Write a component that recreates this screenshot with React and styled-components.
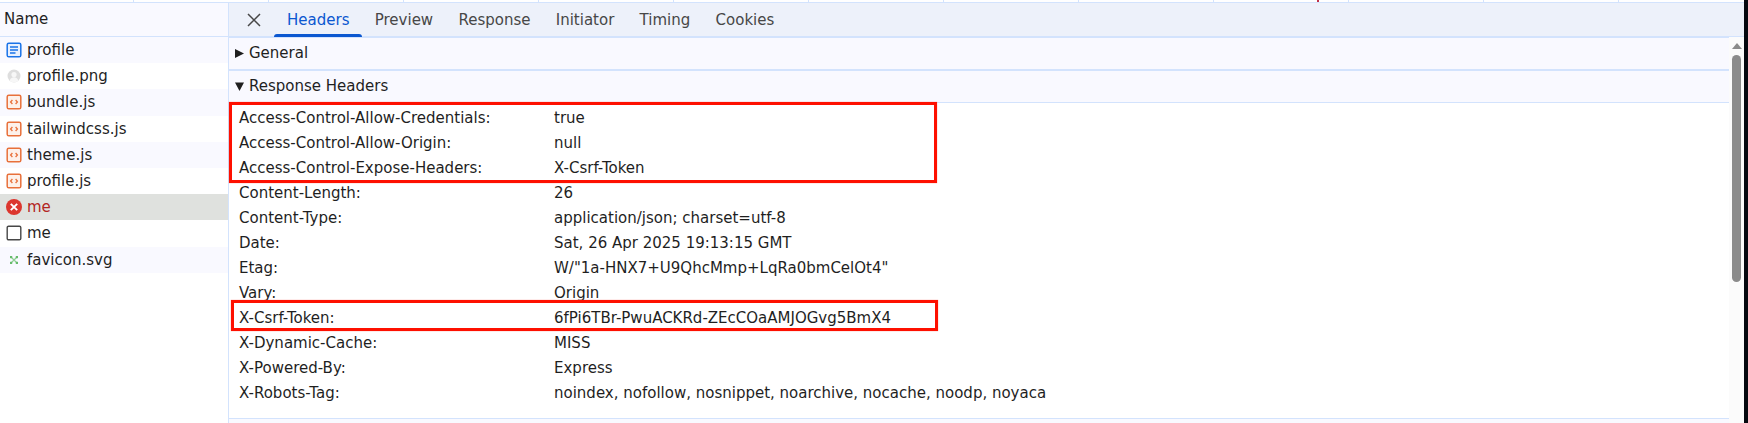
import React from "react";
import styled, { createGlobalStyle } from "styled-components";

const Global = createGlobalStyle`
  html, body { margin: 0; padding: 0; background: #fff; overflow: hidden; }
  body { font-family: "DejaVu Sans", sans-serif; font-size: 15px; color: #1f1f1f; }
`;

const Page = styled.div`
  width: 1748px;
  height: 423px;
  display: flex;
  overflow: hidden;
`;
const Column = styled.div`
  flex: 1;
  min-width: 0;
  display: flex;
  flex-direction: column;
`;
const Ruler = styled.div`
  height: 2px;
  flex: none;
  display: flex;
  border-bottom: 1px solid #d3e3fd;
  background: #fff;
  overflow: hidden;
`;
const RulerCell = styled.div`
  flex: none;
  width: ${p => p.$w}px;
  height: 2px;
  box-sizing: border-box;
  border-right: 1px solid #d3e3fd;
  position: relative;
`;
const RulerMark = styled.div`
  position: absolute;
  left: 103px;
  top: 0;
  width: 2px;
  height: 2px;
  background: #c0304a;
`;
const Main = styled.div`
  flex: 1;
  display: flex;
  min-height: 0;
`;
const Names = styled.div`
  width: 228px;
  flex: none;
  border-right: 1px solid #d3e3fd;
  background: #fff;
`;
const NameHead = styled.div`
  height: 33px;
  line-height: 33px;
  padding-left: 4px;
  background: #f9f9ff;
  border-bottom: 1px solid #d3e3fd;
  color: #1f1f1f;
`;
const NameRow = styled.div`
  height: 26.2px;
  line-height: 26px;
  display: flex;
  align-items: center;
  background: ${p => (p.$selected ? "#dfe1de" : p.$odd ? "#f9f9ff" : "#fff")};
  color: ${p => (p.$error ? "#b3261e" : "#1f1f1f")};
`;
const IconSlot = styled.span`
  width: 27px;
  flex: none;
  display: flex;
  justify-content: center;
`;
const Details = styled.div`
  flex: 1;
  min-width: 0;
  display: flex;
  flex-direction: column;
`;
const TabBar = styled.div`
  height: 33px;
  flex: none;
  display: flex;
  align-items: stretch;
  background: #edf1fa;
  border-bottom: 2px solid #d3e3fd;
`;
const Close = styled.div`
  width: 45.4px;
  box-sizing: border-box;
  padding-left: 5px;
  flex: none;
  display: flex;
  align-items: center;
  justify-content: center;
`;
const Tab = styled.div`
  padding: 0 12.65px;
  line-height: 34px;
  color: ${p => (p.$active ? "#0b57d0" : "#474747")};
  position: relative;
`;
const TabUnderline = styled.div`
  position: absolute;
  left: 0;
  right: 0;
  bottom: -1px;
  height: 3px;
  border-radius: 3px 3px 0 0;
  background: #0b57d0;
`;
const Body = styled.div`
  flex: 1;
  min-height: 0;
  display: flex;
`;
const Content = styled.div`
  flex: 1;
  min-width: 0;
`;
const Section = styled.div`
  height: 31px;
  display: flex;
  align-items: center;
  background: #f9f9ff;
  border-bottom: ${p => p.$thin ? 1 : 2}px solid #d3e3fd;
  padding-left: 6px;
  color: #1f1f1f;
`;
const SectionLabel = styled.span`
  line-height: 30px;
  height: 30px;
  margin-bottom: 1px;
`;
const Arrow = styled.svg`
  width: 9px;
  height: 9px;
  margin-right: 5px;
  margin-bottom: 1px;
  flex: none;
`;
const Rows = styled.div`
  padding-top: 3px;
  height: 316px;
  box-sizing: border-box;
  position: relative;
  border-bottom: 1px solid #d3e3fd;
`;
const HeaderRow = styled.div`
  height: 25px;
  line-height: 25px;
  display: flex;
  padding-left: 10px;
`;
const Key = styled.span`
  width: 315px;
  flex: none;
`;
const Foot = styled.div`
  height: 4px;
  background: #f9f9ff;
`;
const Highlight = styled.div`
  position: absolute;
  left: ${p => p.$l}px;
  top: ${p => p.$t}px;
  width: ${p => p.$w}px;
  height: ${p => p.$h}px;
  box-sizing: border-box;
  border: 3px solid #fe1000;
  box-shadow: 0 0 1px rgba(254, 16, 0, 0.5);
  pointer-events: none;
`;
const Track = styled.div`
  width: 15px;
  flex: none;
  margin-top: -1px;
  background: #fbfbfb;
  display: flex;
  flex-direction: column;
  align-items: center;
`;
const TrackArrow = styled.svg`
  width: 10px;
  height: 6px;
  margin-top: 6px;
  flex: none;
`;
const Thumb = styled.div`
  width: 9px;
  height: 227px;
  margin-top: 6px;
  background: #8b8b8b;
  border-radius: 5px;
  flex: none;
`;
const Strip = styled.div`
  width: 4px;
  flex: none;
  background: #05080f;
`;

const Doc = () => (
  <svg width="16" height="16" viewBox="0 0 16 16" fill="none">
    <rect x="1.2" y="1.2" width="13.6" height="13.6" rx="1.6" stroke="#1a73e8" strokeWidth="1.5" fill="#e8f0fe" />
    <path d="M4 5h8M4 8h8M4 11h5.5" stroke="#1a73e8" strokeWidth="1.4" />
  </svg>
);
const Png = () => (
  <svg width="16" height="16" viewBox="0 0 16 16">
    <circle cx="8" cy="8" r="6.5" fill="#dedede" />
    <circle cx="8" cy="6.6" r="2.6" fill="#f7f7f7" />
    <path d="M3.6 12.5c.9-2.4 2.6-3.3 4.4-3.3s3.5.9 4.4 3.3A6.5 6.5 0 0 1 8 14.5a6.5 6.5 0 0 1-4.4-2z" fill="#f7f7f7" />
  </svg>
);
const Js = () => (
  <svg width="16" height="16" viewBox="0 0 16 16" fill="none">
    <rect x="1.2" y="1.2" width="13.6" height="13.6" rx="1.6" stroke="#e8703a" strokeWidth="1.5" fill="#fdf1ea" />
    <path d="M6.4 6 4.6 8l1.8 2M9.6 6l1.8 2-1.8 2" stroke="#e8703a" strokeWidth="1.3" />
  </svg>
);
const Err = () => (
  <svg width="18" height="18" viewBox="0 0 18 18" fill="none">
    <circle cx="9" cy="9" r="8" fill="#dc362e" />
    <path d="M5.8 5.8l6.4 6.4M12.2 5.8l-6.4 6.4" stroke="#fff" strokeWidth="1.9" />
  </svg>
);
const Blank = () => (
  <svg width="16" height="16" viewBox="0 0 16 16" fill="none">
    <rect x="1.2" y="1.2" width="13.6" height="13.6" rx="1.4" stroke="#474747" strokeWidth="1.4" fill="#fff" />
  </svg>
);
const Svg = () => (
  <svg width="16" height="16" viewBox="0 0 16 16" fill="none">
    <path d="M5 5l6 6M11 5l-6 6" stroke="#8fd092" strokeWidth="1.2" />
    <rect x="4" y="4" width="2.2" height="2.2" fill="#66bb6a" />
    <rect x="9.8" y="4" width="2.2" height="2.2" fill="#66bb6a" />
    <rect x="4" y="9.8" width="2.2" height="2.2" fill="#66bb6a" />
    <rect x="9.8" y="9.8" width="2.2" height="2.2" fill="#66bb6a" />
  </svg>
);

const files = [
  ["profile", Doc],
  ["profile.png", Png],
  ["bundle.js", Js],
  ["tailwindcss.js", Js],
  ["theme.js", Js],
  ["profile.js", Js],
  ["me", Err, true],
  ["me", Blank],
  ["favicon.svg", Svg],
];

const headers = [
  ["Access-Control-Allow-Credentials:", "true"],
  ["Access-Control-Allow-Origin:", "null"],
  ["Access-Control-Expose-Headers:", "X-Csrf-Token"],
  ["Content-Length:", "26"],
  ["Content-Type:", "application/json; charset=utf-8"],
  ["Date:", "Sat, 26 Apr 2025 19:13:15 GMT"],
  ["Etag:", 'W/"1a-HNX7+U9QhcMmp+LqRa0bmCelOt4"'],
  ["Vary:", "Origin"],
  ["X-Csrf-Token:", "6fPi6TBr-PwuACKRd-ZEcCOaAMJOGvg5BmX4"],
  ["X-Dynamic-Cache:", "MISS"],
  ["X-Powered-By:", "Express"],
  ["X-Robots-Tag:", "noindex, nofollow, nosnippet, noarchive, nocache, noodp, noyaca"],
];

const tabs = ["Headers", "Preview", "Response", "Initiator", "Timing", "Cookies"];
const cells = [134, 135, 135, 135, 135, 135, 135, 135, 135, 135, 135, 135, 135];

export default function App() {
  return (
    <Page>
      <Global />
      <Column>
        <Ruler>
          {cells.map((w, i) => (
            <RulerCell key={i} $w={w}>{i === 9 && <RulerMark />}</RulerCell>
          ))}
        </Ruler>
        <Main>
          <Names>
            <NameHead>Name</NameHead>
            {files.map(([name, Icon, error], i) => (
              <NameRow key={i} $odd={i % 2 === 0} $selected={i === 6} $error={error}>
                <IconSlot><Icon /></IconSlot>
                {name}
              </NameRow>
            ))}
          </Names>
          <Details>
            <TabBar>
              <Close>
                <svg width="14" height="14" viewBox="0 0 14 14" fill="none">
                  <path d="M1 1l12 12M13 1L1 13" stroke="#474747" strokeWidth="1.5" />
                </svg>
              </Close>
              {tabs.map((t, i) => (
                <Tab key={t} $active={i === 0}>
                  {t}
                  {i === 0 && <TabUnderline />}
                </Tab>
              ))}
            </TabBar>
            <Body>
              <Content>
                <Section>
                  <Arrow viewBox="0 0 9 9"><path d="M0 0L9 4.5L0 9z" fill="#1f1f1f" /></Arrow>
                  <SectionLabel>General</SectionLabel>
                </Section>
                <Section $thin>
                  <Arrow viewBox="0 0 9 9"><path d="M0 .5h9L4.5 9z" fill="#1f1f1f" /></Arrow>
                  <SectionLabel>Response Headers</SectionLabel>
                </Section>
                <Rows>
                  {headers.map(([k, v]) => (
                    <HeaderRow key={k}><Key>{k}</Key><span>{v}</span></HeaderRow>
                  ))}
                  <Highlight $l={0} $t={-1} $w={708} $h={81} />
                  <Highlight $l={2} $t={197} $w={707} $h={31} />
                </Rows>
                <Foot />
              </Content>
              <Track>
                <TrackArrow viewBox="0 0 10 6"><path d="M0 6L5 0l5 6z" fill="#8b8b8b" /></TrackArrow>
                <Thumb />
              </Track>
            </Body>
          </Details>
        </Main>
      </Column>
      <Strip />
    </Page>
  );
}
